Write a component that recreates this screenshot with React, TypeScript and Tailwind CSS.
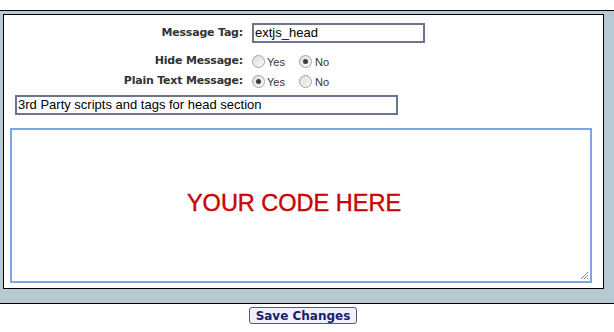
import React from 'react';

const labelFont = { fontFamily: "'DejaVu Sans', Verdana, sans-serif" };
const bodyFont = { fontFamily: "'Liberation Sans', Arial, sans-serif" };

function Radio({ checked }: { checked?: boolean }) {
  return (
    <span className="w-[13px] h-[13px] rounded-full border border-[#a3a3a3] bg-gradient-to-br from-[#dcdcdc] to-[#fbfbfb] flex items-center justify-center shrink-0">
      {checked && <span className="w-[5px] h-[5px] rounded-full bg-[#3a3a3a]"></span>}
    </span>
  );
}

function RadioRow({ label, yes }: { label: string; yes: boolean }) {
  return (
    <div className="flex items-center h-[18px]">
      <div className="w-[239px] text-right text-[11px] font-bold text-[#333] tracking-[-0.2px]" style={labelFont}>
        {label}
      </div>
      <div className="flex items-center ml-[9px]">
        <Radio checked={yes} />
        <span className="ml-[2px] mt-[3px] text-[11px] text-[#333]" style={bodyFont}>Yes</span>
        <span className="ml-[14px]"><Radio checked={!yes} /></span>
        <span className="ml-[3px] mt-[3px] text-[11px] text-[#333]" style={bodyFont}>No</span>
      </div>
    </div>
  );
}

export default function App() {
  return (
    <div className="w-[614px] h-[332px] bg-white overflow-hidden">
      <div className="pt-[10px]">
        <div className="border-t border-b border-black bg-[#b7c9d3] pl-[3px] pt-[3px] pr-[10px] pb-[14px]">
          <div className="border border-black bg-white pt-[8px] pb-[5px]">
            {/* message tag */}
            <div className="flex items-center h-[20px]">
              <div className="w-[239px] text-right text-[11px] font-bold text-[#333] tracking-[-0.2px]" style={labelFont}>
                Message Tag:
              </div>
              <div className="ml-[9px] w-[173px] h-[20px] border-2 border-[#6b7590] flex items-center px-[1px] text-[13px] text-black" style={bodyFont}>
                extjs_head
              </div>
            </div>

            <div className="mt-[9px]">
              <RadioRow label="Hide Message:" yes={false} />
            </div>
            <div className="mt-[2px]">
              <RadioRow label="Plain Text Message:" yes={true} />
            </div>

            {/* description */}
            <div className="mt-[5px] ml-[11px] w-[383px] h-[20px] border-2 border-[#6b7590] flex items-center px-[1px] text-[13px] text-black" style={bodyFont}>
              3rd Party scripts and tags for head section
            </div>

            {/* code area */}
            <div className="relative mt-[13px] ml-[6px] mr-[11px] h-[155px] border-2 border-[#7fa6e2] flex items-center justify-center pr-[14px]">
              <span className="text-[23.5px] text-[#cc0000] mb-[4px] [-webkit-text-stroke:0.4px_#cc0000]" style={bodyFont}>YOUR CODE HERE</span>
              <svg className="absolute right-[1px] bottom-[1px]" width="9" height="9" viewBox="0 0 9 9">
                <line x1="8" y1="1" x2="1" y2="8" stroke="#8a8a8a" strokeWidth="1" />
                <line x1="8" y1="4" x2="4" y2="8" stroke="#8a8a8a" strokeWidth="1" />
                <line x1="8" y1="7" x2="7" y2="8" stroke="#8a8a8a" strokeWidth="1" />
              </svg>
            </div>
          </div>
        </div>

        <div className="flex justify-center pr-[8px] mt-[3px]">
          <button
            className="h-[17px] px-[6px] rounded-[3px] border border-[#5a5a5a] bg-[#eef1ff] text-[12px] font-bold text-[#1b1c6a] leading-none flex items-center"
            style={labelFont}
          >
            Save Changes
          </button>
        </div>
      </div>
    </div>
  );
}
